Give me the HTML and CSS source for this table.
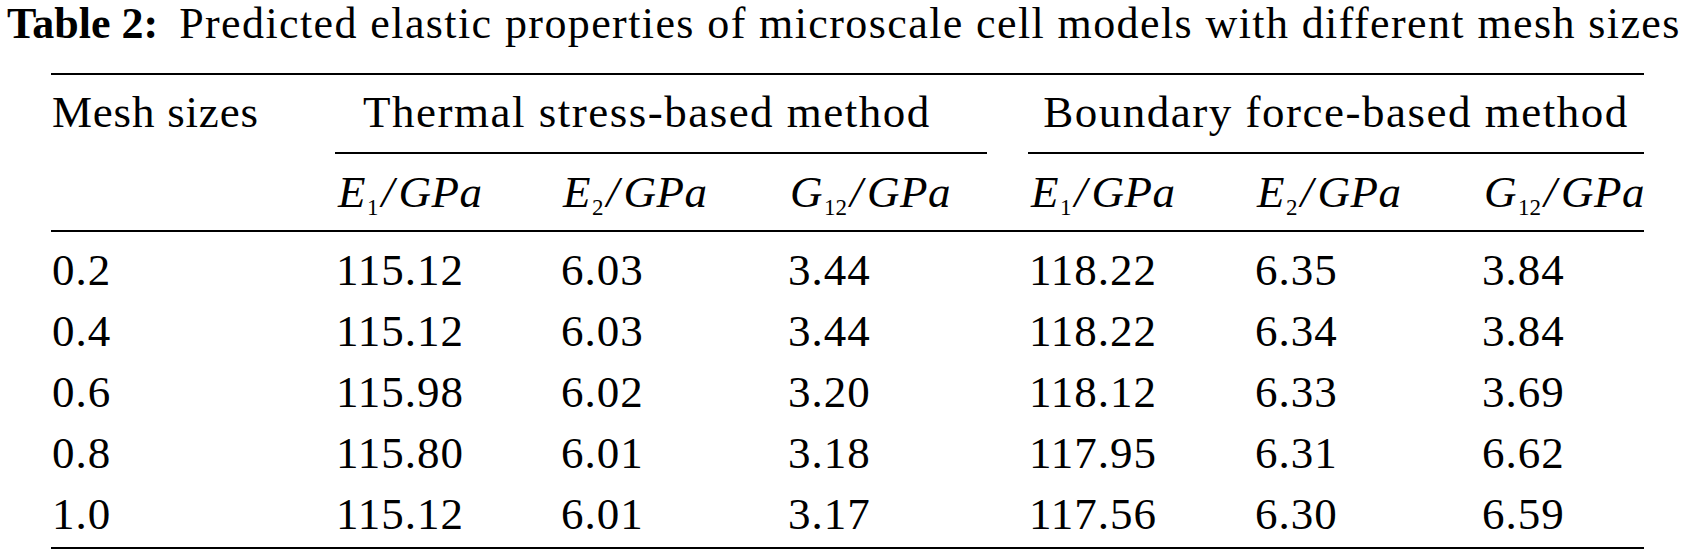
FILE: index.html
```html
<!DOCTYPE html>
<html lang="en">
<head>
<meta charset="utf-8">
<title>Table 2</title>
<link rel="stylesheet" href="styles.css">
</head>
<body>
<div class="caption"><b class="label">Table 2:</b><span class="caption-text">Predicted elastic properties of microscale cell models with different mesh sizes</span></div>
<table class="data">
  <colgroup>
    <col class="c1"><col class="c2"><col class="c3"><col class="c4"><col class="c5"><col class="c6"><col class="c7">
  </colgroup>
  <thead>
    <tr class="h1">
      <td class="mesh" rowspan="2">Mesh sizes</td>
      <td class="group" colspan="3"><div class="group-in thermal">Thermal stress-based method</div></td>
      <td class="group" colspan="3"><div class="group-in boundary">Boundary force-based method</div></td>
    </tr>
    <tr class="h2">
      <td><i>E</i><span class="sub">1</span><span class="sl">/</span><i>GPa</i></td>
      <td><i>E</i><span class="sub">2</span><span class="sl">/</span><i>GPa</i></td>
      <td><i>G</i><span class="sub">12</span><span class="sl">/</span><i>GPa</i></td>
      <td><i>E</i><span class="sub">1</span><span class="sl">/</span><i>GPa</i></td>
      <td><i>E</i><span class="sub">2</span><span class="sl">/</span><i>GPa</i></td>
      <td><i>G</i><span class="sub">12</span><span class="sl">/</span><i>GPa</i></td>
    </tr>
  </thead>
  <tbody>
    <tr class="first"><td>0.2</td><td>115.12</td><td>6.03</td><td>3.44</td><td>118.22</td><td>6.35</td><td>3.84</td></tr>
    <tr><td>0.4</td><td>115.12</td><td>6.03</td><td>3.44</td><td>118.22</td><td>6.34</td><td>3.84</td></tr>
    <tr><td>0.6</td><td>115.98</td><td>6.02</td><td>3.20</td><td>118.12</td><td>6.33</td><td>3.69</td></tr>
    <tr><td>0.8</td><td>115.80</td><td>6.01</td><td>3.18</td><td>117.95</td><td>6.31</td><td>6.62</td></tr>
    <tr class="last"><td>1.0</td><td>115.12</td><td>6.01</td><td>3.17</td><td>117.56</td><td>6.30</td><td>6.59</td></tr>
  </tbody>
</table>
</body>
</html>
```

FILE: styles.css
```css
html, body {
  margin: 0;
  padding: 0;
  background: #ffffff;
}

body {
  font-family: "Liberation Serif", "Times New Roman", serif;
  color: #000000;
  font-size: 45px;
}

.caption {
  padding-left: 7px;
  height: 48px;
  line-height: 48px;
  font-size: 44px;
  white-space: nowrap;
  margin-bottom: 25px;
}

.caption .label {
  font-weight: bold;
  margin-right: 21px;
}

.caption-text {
  letter-spacing: 1.4px;
}

.data {
  margin-left: 51px;
  width: 1593px;
  table-layout: fixed;
  border-collapse: separate;
  border-spacing: 0;
}

.c1 { width: 284px; }
.c2 { width: 225px; }
.c3 { width: 227px; }
.c4 { width: 241px; }
.c5 { width: 226px; }
.c6 { width: 227px; }
.c7 { width: 163px; }

.data td {
  padding: 0 0 0 1px;
  line-height: 50px;
  white-space: nowrap;
  vertical-align: top;
  text-align: left;
}

.data .h1 td {
  border-top: 2px solid #000;
  letter-spacing: 1.5px;
}

.data .h1 .mesh {
  padding-top: 12px;
  border-bottom: 2px solid #000;
  letter-spacing: 0.8px;
}

.data .h1 .group {
  padding: 0;
}

.group-in {
  padding-top: 12px;
  padding-bottom: 15px;
  border-bottom: 2px solid #000;
}

.thermal {
  margin-right: 41px;
  padding-left: 28px;
}

.boundary {
  text-align: center;
}

.data .h2 td {
  padding: 13px 0 13px 3px;
  border-bottom: 2px solid #000;
  letter-spacing: 0.5px;
}

.data i {
  font-style: italic;
}

.sub {
  font-size: 23px;
  line-height: 0;
  position: relative;
  top: 8px;
  margin-left: 1px;
  letter-spacing: 0;
}

.sl {
  font-style: italic;
  margin: 0 4px 0 3px;
}

.data tbody td {
  line-height: 61px;
  letter-spacing: 1px;
}

.data tbody .first td {
  padding-top: 8px;
}

.data tbody .last td {
  padding-bottom: 2px;
  border-bottom: 2px solid #000;
}
```
